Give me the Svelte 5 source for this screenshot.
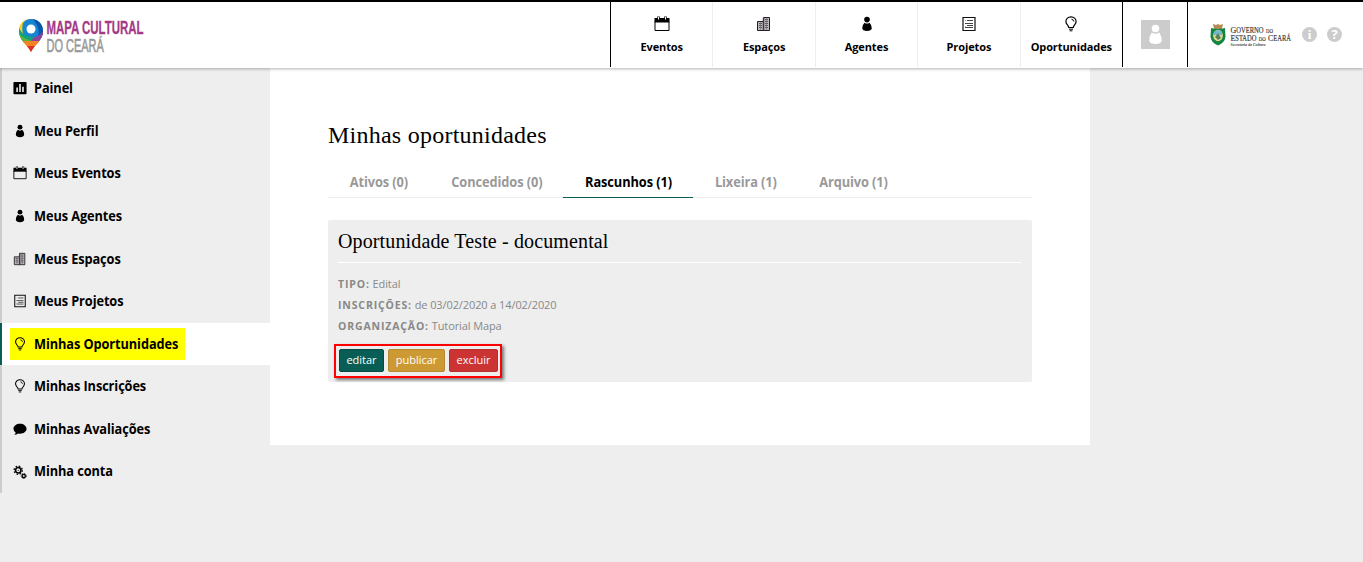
<script>
  const nav = [
    ['calendar', 'Eventos'],
    ['building', 'Espaços'],
    ['person', 'Agentes'],
    ['list', 'Projetos'],
    ['bulb', 'Oportunidades']
  ];
  const menu = [
    ['chart', 'Painel'],
    ['person', 'Meu Perfil'],
    ['calendar', 'Meus Eventos'],
    ['person', 'Meus Agentes'],
    ['building', 'Meus Espaços'],
    ['list', 'Meus Projetos'],
    ['bulb', 'Minhas Oportunidades'],
    ['bulb', 'Minhas Inscrições'],
    ['comment', 'Minhas Avaliações'],
    ['cogs', 'Minha conta']
  ];
  const current = 'Minhas Oportunidades';
  const tabs = [
    ['Ativos (0)', 102],
    ['Concedidos (0)', 133],
    ['Rascunhos (1)', 130],
    ['Lixeira (1)', 105],
    ['Arquivo (1)', 111]
  ];
  const details = [
    ['Tipo:', 'Edital'],
    ['Inscrições:', 'de 03/02/2020 a 14/02/2020'],
    ['Organização:', 'Tutorial Mapa']
  ];
</script>

{#snippet icon(name)}
  <svg class="icon" viewBox="0 0 16 16" fill="none" stroke="#000">
    {#if name === 'calendar'}
      <path d="M.5 2h15v4.500H.5z" fill="#000" stroke="none" />
      <path d="M1 5.500v9h14v-9" />
      <path d="M4.500 3.500v-3M11.500 3.500v-3" stroke-width="2.500" />
      <path d="M4.500 1v2.500M11.500 1v2.500" stroke="#fff" stroke-width="1" />
    {:else if name === 'building'}
      <path d="M1.500 14.500v-9h6v9zM7.500 14.500v-13h6v13z" fill="#bbb" stroke="#222" />
      <path d="M3 7.500h3M3 9.500h3M3 11.500h3M9 3.500h3M9 5.500h3M9 7.500h3M9 9.500h3M9 11.500h3" stroke="#555" />
      <path d="M4.500 6v8M10.500 2v12" stroke="#777" stroke-width=".7" />
      <path d="M7.500 2v12" stroke="#54275f" stroke-width="1.500" />
    {:else if name === 'person'}
      <circle cx="8" cy="3.600" r="2.800" fill="#000" stroke="none" />
      <path d="M5.500 6.700Q8 8.500 10.500 6.700Q12.900 9 12.800 12.300Q12.300 15 8 15T3.200 12.300Q3.100 9 5.500 6.700z" fill="#000" stroke="none" />
    {:else if name === 'list'}
      <path d="M2 1.500h12v13H2z" stroke="#111" stroke-width="1.200" />
      <path d="M4 4.500h1M4 7.500h1M4 10.500h1" stroke="#aaa" />
      <path d="M6 4.500h6M4 7.500h8M6 9.500h6M4 11.500h8" stroke="#444" />
    {:else if name === 'bulb'}
      <path d="M5.800 11.500C5.800 9.500 2.900 8.500 2.900 5.500a5.100 4.700 0 0 1 10.200 0c0 3-2.900 4-2.900 6z" stroke-width="1.200" />
      <path d="M6 13.200h4M6.600 14.800h2.800M8.500 3.200q2 .2 2.300 2.300" />
    {:else if name === 'chart'}
      <rect x=".5" y="1" width="15" height="14" rx="1" fill="#000" stroke="none" />
      <path d="M4.700 12.500v-5M8 12.500v-9M11.400 12.500v-6" stroke="#fff" stroke-width="1.700" />
    {:else if name === 'comment'}
      <path d="M8 2c4 0 7.500 2.400 7.500 5.800S12 13.400 8 13.400q-1.200 0-2.200-.2Q4 14.600 1.300 14.600 3 13.500 3 12 .500 10.300.500 7.800C.500 4.400 4 2 8 2z" fill="#000" stroke="none" />
    {:else}
      <circle cx="6" cy="6" r="3.100" stroke-width="1.900" />
      <circle cx="6" cy="6" r="4.700" stroke-width="1.400" stroke-dasharray="1.850 1.840" />
      <circle cx="12.300" cy="12.500" r="1.800" stroke-width="1.500" />
      <circle cx="12.300" cy="12.500" r="2.900" stroke-width="1" stroke-dasharray="1.300 .977" />
      <circle cx="6" cy="6" r=".7" fill="#000" stroke="none" />
    {/if}
  </svg>
{/snippet}

<header>
  <svg class="logo" viewBox="0 -6 130 46">
    <defs>
      <clipPath id="pin"><path d="M12 1C5 1 0 6 0 13c0 9 8 13 12 21 4-8 12-12 12-21C24 6 19 1 12 1z" /></clipPath>
    </defs>
    <g clip-path="url(#pin)">
      <path d="M0 0h24v35H0z" fill="#ef7d20" />
      <path d="M0 0h14v20H0z" fill="#f5d51d" />
      <path d="M4 5Q9-2 20 2l5 6v15H10Q1 17 4 5z" fill="#1685d2" />
      <path d="M13 0q10 2 12 10v10h-7q5-9-5-20z" fill="#0758ad" />
      <path d="M2 16q9 6 14 3 6-2 8-6v12H2z" fill="#8e449d" />
      <path d="M0 10q4 9 15 9l-3 4H0z" fill="#12a37b" />
      <path d="M0 16q5 5 13 7H0z" fill="#59b53d" />
      <path d="M0 23h24v5H0z" fill="#f18421" />
      <path d="M3 28h18v7H3z" fill="#dc3028" />
    </g>
    <circle cx="12" cy="11" r="4.500" fill="#fff" />
    <text transform="translate(27.500 15.500) scale(.602 1)" class="brand">MAPA CULTURAL</text>
    <text transform="translate(27.500 34) scale(.61 1)" class="place">DO CEARÁ</text>
  </svg>
  <nav>
    {#each nav as [name, label]}
      <a>{@render icon(name)}<span>{label}</span></a>
    {/each}
  </nav>
  <div class="user">
    <svg viewBox="0 0 29 29"><path d="M0 0h29v29H0z" fill="#ccc" /><circle cx="14.500" cy="8.500" r="3.800" fill="#fff" /><path d="M10.700 12.500q3.800 2.400 7.600 0 2.700 4 2.400 8.500-.6 3-6.200 3t-6.200-3q-.3-4.500 2.400-8.500z" fill="#fff" /></svg>
  </div>
  <div class="gov">
    <svg class="state" viewBox="0 0 82 24">
      <path d="M3 1l3 1 2-1 2 1 3-1-1 5H4z" fill="#b38b55" />
      <path d="M1 5q7 2 14 0l.5 9q-1 6-7.500 8.500Q1.500 20 .500 14z" fill="#148443" />
      <ellipse cx="8" cy="12.500" rx="4.800" ry="5.800" fill="#e5d98c" />
      <path d="M4 9q4-4 8 0v3H4z" fill="#74b9c9" />
      <path d="M5 14l3-4 3 5-3 2z" fill="#59815b" />
      <text x="20.500" y="10" class="gov-name" textLength="42.500" lengthAdjust="spacingAndGlyphs">G<tspan class="small">OVERNO</tspan><tspan class="tiny">&nbsp; DO</tspan></text>
      <text x="20.500" y="18" class="gov-name" textLength="60.500" lengthAdjust="spacingAndGlyphs">E<tspan class="small">STADO</tspan><tspan class="tiny">&nbsp; DO &nbsp;</tspan>C<tspan class="small">EARÁ</tspan></text>
      <text x="20.500" y="22.500" class="secretary" textLength="35" lengthAdjust="spacingAndGlyphs">Secretaria da Cultura</text>
    </svg>
    <b class="round info">i</b><b class="round">?</b>
  </div>
</header>

<div class="page">
  <aside>
    {#each menu as [name, label]}
      <a class:current={label === current}><span class="entry">{@render icon(name)}<span>{label}</span></span></a>
    {/each}
  </aside>
  <main>
    <h1>Minhas oportunidades</h1>
    <ul>
      {#each tabs as [label, width], i}
        <li class:active={i === 2} style:width="{width}px"><span>{label}</span></li>
      {/each}
    </ul>
    <article>
      <h2>Oportunidade Teste - documental</h2>
      <div class="details">
        {#each details as [label, value]}
          <p><b>{label}</b> {value}</p>
        {/each}
      </div>
      <div class="actions">
        <button class="edit">editar</button>
        <button class="publish">publicar</button>
        <button class="delete">excluir</button>
      </div>
    </article>
  </main>
</div>

<style>
  :global(body) { background: #eee; overflow: hidden; }
  header, .page { font-family: "Open Sans", sans-serif; color: #000; }
  header { position: relative; box-sizing: border-box; height: 68px; border-top: 2px solid #000; background: #fff; display: flex; box-shadow: 0 1px 3px rgba(0,0,0,.3); }
  svg { display: block; flex: none; overflow: visible; }
  .logo { width: 130px; height: 46px; margin: 10px 461px 0 19px; }
  .brand { font: 700 19px "Liberation Sans", sans-serif; fill: #a43a86; stroke: #a43a86; stroke-width: .3px; }
  .place { font: 400 18px "Liberation Sans", sans-serif; fill: #999; stroke: #999; stroke-width: .6px; }
  nav { box-sizing: border-box; width: 513px; height: 65px; display: flex; border: solid #000; border-width: 0 1px; }
  nav a { box-sizing: border-box; flex: 1 1 0; display: flex; flex-direction: column; align-items: center; padding-top: 14px; font-weight: 700; font-size: 11px; line-height: 15px; letter-spacing: -.1px; white-space: nowrap; }
  nav a + a { border-left: 1px solid #eee; }
  nav a span { margin-top: 7px; }
  .icon { width: 16px; height: 16px; }
  .user { box-sizing: border-box; width: 65px; height: 65px; border-right: 1px solid #000; padding: 18px 0 0 18px; }
  .user svg { width: 29px; height: 29px; }
  .gov { display: flex; align-items: flex-start; padding: 21px 0 0 22px; }
  .state { width: 82px; height: 24px; margin-right: 10px; }
  .gov-name { font: 9px "Liberation Serif", serif; fill: #333; stroke: #333; stroke-width: .15px; }
  .small { font-size: 7.500px; }
  .tiny { font-size: 5.500px; }
  .secretary { font: italic 700 4px "Liberation Serif", serif; fill: #444; }
  .round { width: 15px; height: 15px; margin: 4px 10px 0 0; border-radius: 50%; background: #ccc; color: #fff; text-align: center; font-size: 13px; line-height: 15px; }
  .info { font-family: "Liberation Serif", serif; }
  .page { display: flex; align-items: flex-start; }
  aside { width: 270px; margin-top: -1px; }
  aside a { box-sizing: border-box; display: flex; align-items: center; height: 42.600px; border-left: 2px solid #ccc; padding-left: 8px; font-weight: 700; font-size: 14px; }
  .entry { display: flex; align-items: center; box-sizing: border-box; width: 175px; height: 32px; padding-left: 3px; white-space: nowrap; }
  .entry > span { margin: -1.300px 0 0 7px; letter-spacing: -.1px; transform: scaleX(.912); transform-origin: left; }
  aside .icon { width: 14px; height: 14px; }
  .current { border-color: #085e55; background: #fff; }
  .current .entry { background: #ff0; margin-top: 1px; }
  main { box-sizing: border-box; width: 820px; height: 377px; padding: 51px 58px 0; background: #fff; }
  h1, h2 { font-family: "Liberation Serif", serif; font-weight: 400; margin: 0; white-space: nowrap; }
  h1 { font-size: 24px; line-height: 32px; letter-spacing: .24px; }
  ul { display: flex; height: 31px; margin: 15px 0 22px; padding: 0; list-style: none; border-bottom: 1px solid #eee; }
  li { box-sizing: border-box; height: 32px; text-align: center; color: #999; font-weight: 700; font-size: 14px; line-height: 31px; letter-spacing: -.1px; white-space: nowrap; }
  li span { display: inline-block; transform: scaleX(.915); }
  .active { color: #000; border-bottom: 1px solid #085e55; }
  article { box-sizing: border-box; height: 162px; padding: 0 11px 0 10px; background: #eee; border-radius: 2px; }
  h2 { height: 42px; font-size: 20px; line-height: 43px; border-bottom: 1px solid #fff; letter-spacing: .13px; }
  .details { padding-top: 10px; }
  p { margin: 0; height: 21px; line-height: 21px; font-size: 11px; letter-spacing: -.1px; color: #888; white-space: nowrap; }
  p b { text-transform: uppercase; letter-spacing: .85px; font-size: 10.500px; }
  .actions { box-sizing: border-box; display: flex; gap: 4px; width: 168px; height: 34px; margin: 8px 0 0 -4px; padding: 3px; border: 2px solid #f00; box-shadow: 2px 2px 3px rgba(0,0,0,.5); }
  button { flex: none; box-sizing: border-box; height: 23px; padding: 0 0 2px; border: 1px solid #064a43; border-radius: 2px; color: #fff; font: 11px/18px "Open Sans", sans-serif; }
  .edit { width: 45px; background: #085e55; }
  .publish { width: 57px; background: #c93; border-color: #b8892e; }
  .delete { width: 49px; background: #c33; border-color: #b82e2e; }
</style>
